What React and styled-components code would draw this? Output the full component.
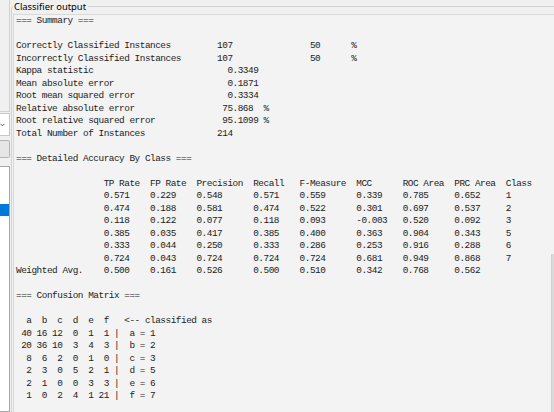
import React from "react";
import styled, { createGlobalStyle } from "styled-components";

const GlobalStyle = createGlobalStyle`
  html, body {
    margin: 0;
    padding: 0;
    background: #f0f0f0;
    overflow: hidden;
  }
  #root {
    width: 554px;
    height: 412px;
  }
`;

const Screen = styled.div`
  display: flex;
  width: 554px;
  height: 412px;
  overflow: hidden;
  background: #f0f0f0;
`;

const SidePanel = styled.div`
  flex: 0 0 11px;
  box-sizing: border-box;
  padding-right: 1px;
  display: flex;
  flex-direction: column;
`;

const SideBox = styled.div`
  height: 112px;
  box-sizing: border-box;
  border-right: 1px solid #d2d2d2;
  border-bottom: 1px solid #d2d2d2;
`;

const Combo = styled.div`
  margin-top: 1px;
  height: 23px;
  box-sizing: border-box;
  background: #ffffff;
  border: 1px solid #c6c6c6;
  border-left: none;
  display: flex;
  align-items: center;
`;

const SideButton = styled.div`
  margin-top: 4px;
  height: 18px;
  box-sizing: border-box;
  background: #e6e6e6;
  border: 1px solid #b4b4b4;
  border-left: none;
  border-radius: 0 2px 2px 0;
`;

const SideList = styled.div`
  margin-top: 8px;
  flex: 1;
  box-sizing: border-box;
  background: #ffffff;
  border: 1px solid #a8a8a8;
  border-left: none;
  padding-top: 25px;
`;

const ListItem = styled.div`
  height: 12px;
  background: ${(p) => (p.$selected ? "#0078d7" : "transparent")};
`;

const Frame = styled.fieldset`
  flex: 0 0 560px;
  box-sizing: border-box;
  height: 440px;
  margin: 0;
  padding: 1px 1px 0 1px;
  min-width: 0;
  border: 1px solid #d3d3d3;
  border-radius: 3px;
  display: flex;
  flex-direction: column;
`;

const Legend = styled.legend`
  padding: 0 2px 0 1px;
  font-family: "Noto Sans", "Liberation Sans", sans-serif;
  font-size: 9.4px;
  line-height: 13px;
  color: #000;
`;

const OutputPane = styled.div`
  flex: 1;
  display: flex;
  background: #f3f3f3;
  border: 1px solid #d9d9d9;
  min-height: 0;
`;

const OutputText = styled.pre`
  flex: 1;
  margin: 0;
  padding: 0 0 0 2px;
  font-family: "Liberation Mono", "Courier New", monospace;
  font-size: 9.4px;
  letter-spacing: -0.47px;
  line-height: 12.5px;
  color: #1c1c1c;
  white-space: pre;
  overflow: hidden;
`;

const ScrollBar = styled.div`
  flex: 0 0 17px;
  display: flex;
  flex-direction: column;
  padding-top: 239px;
`;

const ScrollThumb = styled.div`
  flex: 1;
  background: #dadada;
  border-left: 1px solid #d0d0d0;
`;

const pad = (s, n) => String(s).padEnd(n, " ");

const widths = [9, 9, 11, 9, 11, 9, 10, 10];

const header = ["TP Rate", "FP Rate", "Precision", "Recall", "F-Measure", "MCC", "ROC Area", "PRC Area", "Class"];

const rows = [
  ["", ["0.571", "0.229", "0.548", "0.571", "0.559", "0.339", "0.785", "0.652", "1"]],
  ["", ["0.474", "0.188", "0.581", "0.474", "0.522", "0.301", "0.697", "0.537", "2"]],
  ["", ["0.118", "0.122", "0.077", "0.118", "0.093", "-0.003", "0.520", "0.092", "3"]],
  ["", ["0.385", "0.035", "0.417", "0.385", "0.400", "0.363", "0.904", "0.343", "5"]],
  ["", ["0.333", "0.044", "0.250", "0.333", "0.286", "0.253", "0.916", "0.288", "6"]],
  ["", ["0.724", "0.043", "0.724", "0.724", "0.724", "0.681", "0.949", "0.868", "7"]],
  ["Weighted Avg.", ["0.500", "0.161", "0.526", "0.500", "0.510", "0.342", "0.768", "0.562", ""]],
];

const fmtRow = (label, cells) =>
  pad(label, 17) + cells.map((c, i) => (i < widths.length ? pad(c, widths[i]) : c)).join("");

const matrix = [
  [40, 16, 12, 0, 1, 1],
  [20, 36, 10, 3, 4, 3],
  [8, 6, 2, 0, 1, 0],
  [2, 3, 0, 5, 2, 1],
  [2, 1, 0, 0, 3, 3],
  [1, 0, 2, 4, 1, 21],
];
const ids = ["a", "b", "c", "d", "e", "f"];
const classNames = ["1", "2", "3", "5", "6", "7"];

const lines = [
  "=== Summary ===",
  "",
  "Correctly Classified Instances         107               50      %",
  "Incorrectly Classified Instances       107               50      %",
  "Kappa statistic                          0.3349",
  "Mean absolute error                      0.1871",
  "Root mean squared error                  0.3334",
  "Relative absolute error                 75.868  %",
  "Root relative squared error             95.1099 %",
  "Total Number of Instances              214     ",
  "",
  "=== Detailed Accuracy By Class ===",
  "",
  fmtRow("", header),
  ...rows.map(([l, c]) => fmtRow(l, c)),
  "",
  "=== Confusion Matrix ===",
  "",
  ids.map((id) => id.padStart(3, " ")).join("") + "   <-- classified as",
  ...matrix.map(
    (r, i) =>
      r.map((v) => String(v).padStart(3, " ")).join("") + " |  " + ids[i] + " = " + classNames[i]
  ),
];

function ComboArrow() {
  return (
    <svg width="5" height="4" viewBox="0 0 5 4" style={{ display: "block" }}>
      <path d="M0.5 0.8 L2.5 2.8 L4.5 0.8" fill="none" stroke="#555" strokeWidth="1" />
    </svg>
  );
}

export default function App() {
  return (
    <>
      <GlobalStyle />
      <Screen>
        <SidePanel>
          <SideBox />
          <Combo>
            <ComboArrow />
          </Combo>
          <SideButton />
          <SideList>
            <ListItem />
            <ListItem $selected />
          </SideList>
        </SidePanel>
        <Frame>
          <Legend>Classifier output</Legend>
          <OutputPane>
            <OutputText>{lines.join("\n")}</OutputText>
            <ScrollBar>
              <ScrollThumb />
            </ScrollBar>
          </OutputPane>
        </Frame>
      </Screen>
    </>
  );
}
